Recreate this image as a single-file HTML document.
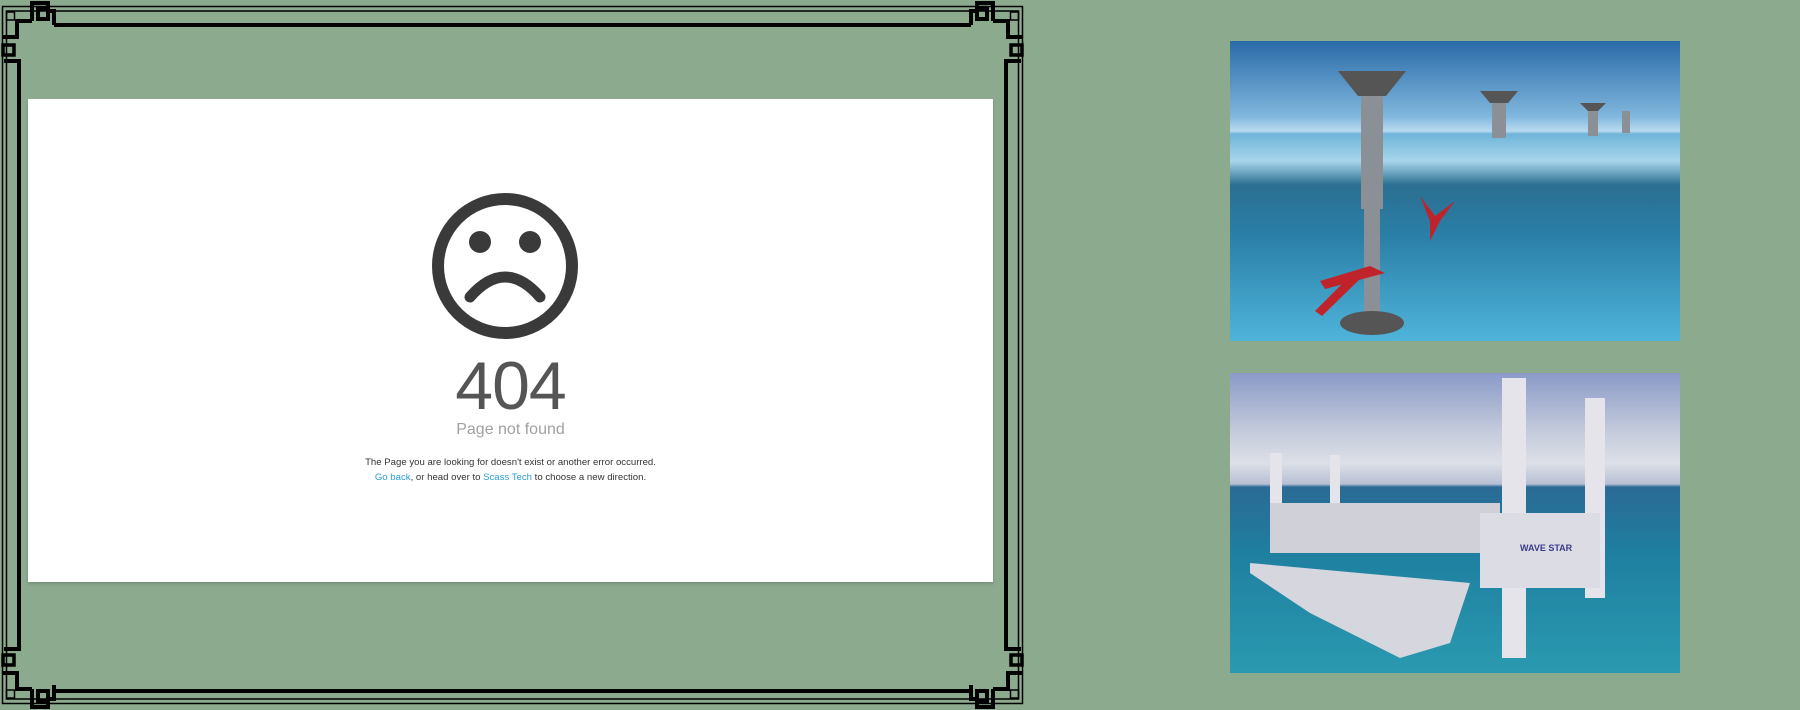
<!DOCTYPE html>
<html><head><meta charset="utf-8"><style>
html,body{margin:0;padding:0}
body{width:1800px;height:710px;background:#8caa8e;position:relative;overflow:hidden;font-family:"Liberation Sans",sans-serif}
.panel{position:absolute;left:28px;top:99px;width:965px;height:483px;background:#fff;box-shadow:0 2px 3px rgba(0,0,0,.15)}
.t404{position:absolute;left:0;width:965px;top:252px;text-align:center;font-size:68px;color:#555;line-height:70px;letter-spacing:-1px}
.pnf{position:absolute;left:0;width:965px;top:322px;text-align:center;font-size:16px;color:#a0a0a0;}
.msg{position:absolute;left:0;width:965px;top:357px;text-align:center;font-size:9.6px;color:#333;line-height:14.5px}
.msg a{color:#2a9fd8;text-decoration:none}
.img{position:absolute;left:1230px;width:450px;height:300px;overflow:hidden}
</style></head><body>
<svg width="1030" height="710" style="position:absolute;left:0;top:0">
<g fill="none" stroke="#000">
<rect x="2.5" y="6.5" width="1020" height="697" stroke-width="1.5"/>
<rect x="6.5" y="11" width="1012" height="688" stroke-width="1.5"/>
<path d="M54,25 H971 M19,61 V649" stroke-width="4"/>
<path d="M54,691 H971 M1006,61 V649" stroke-width="4"/>
<g id="c">
<rect x="6.5" y="12" width="8" height="8" stroke-width="1.5"/>
<path d="M54,25 V11 H46 M32,21 V3 H48 V19 H38 V9 H48 M32,21 H17 V37 H2" stroke-width="4"/>
<rect x="3" y="45" width="11" height="10" stroke-width="3.5"/>
<path d="M19,100 V61 H4" stroke-width="4"/>
</g>
<use href="#c" transform="translate(1025,0) scale(-1,1)"/>
<use href="#c" transform="translate(0,710) scale(1,-1)"/>
<use href="#c" transform="translate(1025,710) scale(-1,-1)"/>
</g></svg>
<div class="panel">
<svg width="160" height="160" style="position:absolute;left:397px;top:88px" viewBox="0 0 160 160">
<circle cx="80" cy="79" r="67" fill="none" stroke="#3a3a3a" stroke-width="12"/>
<circle cx="55" cy="55" r="11" fill="#3a3a3a"/><circle cx="105" cy="55" r="11" fill="#3a3a3a"/>
<path d="M45,110 Q80,70 115,110" fill="none" stroke="#3a3a3a" stroke-width="11" stroke-linecap="round"/>
</svg>
<div class="t404">404</div>
<div class="pnf">Page not found</div>
<div class="msg">The Page you are looking for doesn't exist or another error occurred.<br><a>Go back</a>, or head over to <a>Scass Tech</a> to choose a new direction.</div>
</div>
<div class="img" style="top:41px;background:linear-gradient(180deg,#2a6aa8 0%,#7fb6dc 25%,#b8daf0 30%,#6fb4d8 31%,#a8d6ec 40%,#2b6f90 48%,#2a7fa8 65%,#4fb4da 100%)">
<svg width="450" height="300" style="position:absolute;left:0;top:0">
<g fill="#8a9096"><rect x="131" y="40" width="22" height="128"/><path d="M108,30 H176 L156,55 H128Z" fill="#555"/><rect x="134" y="168" width="16" height="110"/><ellipse cx="142" cy="282" rx="32" ry="12" fill="#555"/>
<rect x="262" y="55" width="14" height="42"/><path d="M250,50 H288 L278,62 H260Z" fill="#555"/><rect x="358" y="65" width="10" height="30"/><path d="M350,62 H376 L368,70 H358Z" fill="#555"/><rect x="392" y="70" width="8" height="22"/></g>
<g fill="#c0242a"><path d="M90,240 L140,225 L155,232 L95,248Z"/><path d="M85,270 L125,230 L132,236 L92,275Z"/><path d="M190,155 L205,175 L225,160 L210,180 L200,200 L200,180Z"/></g>
</svg></div>
<div class="img" style="top:373px;background:linear-gradient(180deg,#8a9ac8 0%,#c6ccdc 20%,#dde0e8 30%,#b8c0d4 37%,#2a6a94 38%,#1f7fa0 60%,#2a9ab0 100%)">
<svg width="450" height="300" style="position:absolute;left:0;top:0">
<g fill="#e4e4ea"><rect x="272" y="5" width="24" height="280"/><rect x="355" y="25" width="20" height="200"/><rect x="40" y="80" width="12" height="100"/><rect x="100" y="82" width="10" height="80"/>
<path d="M40,130 H270 V180 H40Z" fill="#cfd0d8"/><rect x="250" y="140" width="120" height="75" fill="#dcdde4"/>
<path d="M20,190 L240,210 L220,270 L170,285 L80,240 L20,200Z" fill="#d6d7de"/></g>
<text x="290" y="178" font-size="9" font-weight="bold" fill="#3a3a8a" font-family="Liberation Sans">WAVE STAR</text>
</svg></div>
</body></html>
